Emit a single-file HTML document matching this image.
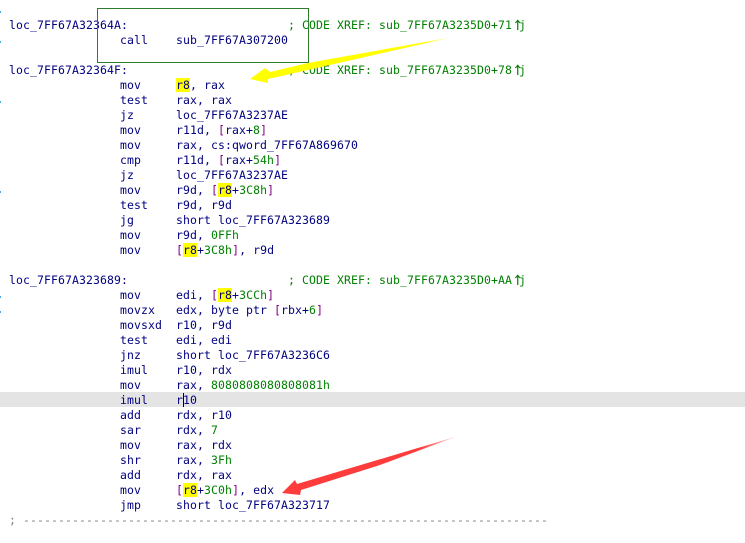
<!DOCTYPE html>
<html><head><meta charset="utf-8">
<style>
html,body{margin:0;padding:0;background:#fff;width:745px;height:543px;overflow:hidden}
#w{position:relative;width:745px;height:543px;overflow:hidden;font-family:"DejaVu Sans Mono","Liberation Mono",monospace;font-size:11.5px;letter-spacing:.077px;color:#000080}
.l{position:absolute;left:9px;white-space:pre;height:15px;line-height:15px}
.o{position:absolute;left:120px;white-space:pre;height:15px;line-height:15px}
.a{position:absolute;left:176px;white-space:pre;height:15px;line-height:15px}
.c{position:absolute;left:288px;white-space:pre;height:15px;line-height:15px;color:#008000}
i{font-style:normal;color:#008000}
b{font-weight:normal;background:linear-gradient(#ffff00 14px,transparent 14px);display:inline-block;height:15px}
u{text-decoration:none;color:#800080}
s{text-decoration:none;display:inline-block;width:7px;height:15px;overflow:visible;text-align:center;font-family:"Noto Sans CJK SC",sans-serif;font-weight:bold;letter-spacing:0;line-height:15px;vertical-align:top}
</style></head><body><div id="w">
<div style="position:absolute;left:0;top:392px;width:745px;height:15px;background:#e4e4e4"></div>

<div class="l" style="top:18px">loc_7FF67A32364A:</div><div class="c" style="top:18px">; CODE XREF: sub_7FF67A3235D0+71<s>↑</s>j</div>
<div class="o" style="top:33px">call</div><div class="a" style="top:33px">sub_7FF67A307200</div>

<div class="l" style="top:63px">loc_7FF67A32364F:</div><div class="c" style="top:63px">; CODE XREF: sub_7FF67A3235D0+78<s>↑</s>j</div>
<div class="o" style="top:78px">mov</div><div class="a" style="top:78px"><b>r8</b>, rax</div>
<div class="o" style="top:93px">test</div><div class="a" style="top:93px">rax, rax</div>
<div class="o" style="top:108px">jz</div><div class="a" style="top:108px">loc_7FF67A3237AE</div>
<div class="o" style="top:123px">mov</div><div class="a" style="top:123px">r11d, <u>[</u>rax+<i>8</i><u>]</u></div>
<div class="o" style="top:138px">mov</div><div class="a" style="top:138px">rax, cs:qword_7FF67A869670</div>
<div class="o" style="top:153px">cmp</div><div class="a" style="top:153px">r11d, <u>[</u>rax+<i>54h</i><u>]</u></div>
<div class="o" style="top:168px">jz</div><div class="a" style="top:168px">loc_7FF67A3237AE</div>
<div class="o" style="top:183px">mov</div><div class="a" style="top:183px">r9d, <u>[</u><b>r8</b>+<i>3C8h</i><u>]</u></div>
<div class="o" style="top:198px">test</div><div class="a" style="top:198px">r9d, r9d</div>
<div class="o" style="top:213px">jg</div><div class="a" style="top:213px">short loc_7FF67A323689</div>
<div class="o" style="top:228px">mov</div><div class="a" style="top:228px">r9d, <i>0FFh</i></div>
<div class="o" style="top:243px">mov</div><div class="a" style="top:243px"><u>[</u><b>r8</b>+<i>3C8h</i><u>]</u>, r9d</div>

<div class="l" style="top:273px">loc_7FF67A323689:</div><div class="c" style="top:273px">; CODE XREF: sub_7FF67A3235D0+AA<s>↑</s>j</div>
<div class="o" style="top:288px">mov</div><div class="a" style="top:288px">edi, <u>[</u><b>r8</b>+<i>3CCh</i><u>]</u></div>
<div class="o" style="top:303px">movzx</div><div class="a" style="top:303px">edx, byte ptr <u>[</u>rbx+<i>6</i><u>]</u></div>
<div class="o" style="top:318px">movsxd</div><div class="a" style="top:318px">r10, r9d</div>
<div class="o" style="top:333px">test</div><div class="a" style="top:333px">edi, edi</div>
<div class="o" style="top:348px">jnz</div><div class="a" style="top:348px">short loc_7FF67A3236C6</div>
<div class="o" style="top:363px">imul</div><div class="a" style="top:363px">r10, rdx</div>
<div class="o" style="top:378px">mov</div><div class="a" style="top:378px">rax, <i>8080808080808081h</i></div>
<div class="o" style="top:393px">imul</div><div class="a" style="top:393px">r10</div>
<div class="o" style="top:408px">add</div><div class="a" style="top:408px">rdx, r10</div>
<div class="o" style="top:423px">sar</div><div class="a" style="top:423px">rdx, <i>7</i></div>
<div class="o" style="top:438px">mov</div><div class="a" style="top:438px">rax, rdx</div>
<div class="o" style="top:453px">shr</div><div class="a" style="top:453px">rax, <i>3Fh</i></div>
<div class="o" style="top:468px">add</div><div class="a" style="top:468px">rdx, rax</div>
<div class="o" style="top:483px">mov</div><div class="a" style="top:483px"><u>[</u><b>r8</b>+<i>3C0h</i><u>]</u>, edx</div>
<div class="o" style="top:498px">jmp</div><div class="a" style="top:498px">short loc_7FF67A323717</div>
<div class="l" style="top:513px;color:#808080">; ---------------------------------------------------------------------------</div>

<div style="position:absolute;left:183px;top:393px;width:1px;height:14px;background:#000"></div>
<div style="position:absolute;left:97px;top:8px;width:210px;height:53px;border:1px solid #2e7d2e"></div>

<svg width="745" height="543" style="position:absolute;left:0;top:0">
<defs>
<linearGradient id="y" gradientUnits="userSpaceOnUse" x1="453" y1="37" x2="425" y2="42"><stop offset="0" stop-color="#ffff00" stop-opacity=".2"/><stop offset="1" stop-color="#ffff00"/></linearGradient>
<linearGradient id="r" gradientUnits="userSpaceOnUse" x1="458" y1="436" x2="420" y2="448"><stop offset="0" stop-color="#ff3c3c" stop-opacity=".1"/><stop offset="1" stop-color="#ff3c3c"/></linearGradient>
</defs>
<polygon points="453,37 308,63 270,72 265,68 250,79 268,83 268,79 330,65" fill="url(#y)"/>
<polygon points="458,436 297,484 295,480 282,493 300,495 301,490 380,465" fill="url(#r)"/>
<g fill="#4aa8e8"><rect x="0" y="11" width="1" height="2"/><rect x="0" y="41" width="1" height="2"/><rect x="0" y="101" width="1" height="2"/><rect x="0" y="191" width="1" height="2"/><rect x="0" y="296" width="1" height="2"/><rect x="0" y="311" width="1" height="2"/></g>
</svg>
</div></body></html>
